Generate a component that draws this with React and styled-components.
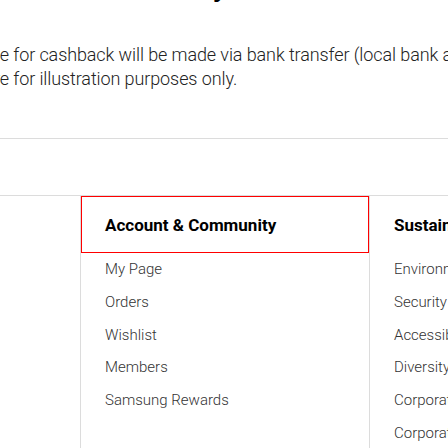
import React from 'react';
import styled, { createGlobalStyle } from 'styled-components';

const GlobalStyle = createGlobalStyle`
	html, body {
		margin: 0;
		padding: 0;
		background: #fff;
	}
	body {
		font-family: Roboto, "Liberation Sans", sans-serif;
		overflow: hidden;
	}
`;

const footerColumns = [
	{
		title: 'Account & Community',
		focused: true,
		links: ['My Page', 'Orders', 'Wishlist', 'Members', 'Samsung Rewards'],
	},
	{
		title: 'Sustainability',
		links: [
			'Environment',
			'Security & Privacy',
			'Accessibility',
			'Diversity & Inclusion',
			'Corporate Citizenship',
			'Corporate Sustainability',
		],
	},
];

const App = () => {
	return (
		<Page>
			<GlobalStyle />
			<Notes>
				<Title>Cashback Terms Summary</Title>
				<NoteLine>
					<Lead>Payable</Lead> for cashback will be made via bank transfer (local bank account only).
				</NoteLine>
				<NoteLine>
					<Lead>Images are</Lead> for illustration purposes only.
				</NoteLine>
			</Notes>

			<Spacer />

			<Footer>
				{footerColumns.map((col) => (
					<Column key={col.title}>
						<ColumnTitle $focused={col.focused}>{col.title}</ColumnTitle>
						<LinkList>
							{col.links.map((link) => (
								<LinkItem key={link}>
									<a href="#">{link}</a>
								</LinkItem>
							))}
						</LinkList>
					</Column>
				))}
			</Footer>
		</Page>
	);
};

export default App;

const Page = styled.div`
	width: 100%;
	height: 448px;
	overflow: hidden;
	background: #fff;
`;

const Notes = styled.section`
	display: flow-root;
	margin-left: -111px;
	padding-bottom: 47px;
	border-bottom: 1px solid #dcdcdc;
`;

const Title = styled.h2`
	width: 211px;
	margin: -27px 0 42px;
	font-size: 28px;
	line-height: 28px;
	font-weight: 700;
	text-align: right;
	white-space: nowrap;
	color: #000;
`;

const NoteLine = styled.p`
	margin: 0;
	font-size: 18px;
	line-height: 24px;
	font-weight: 300;
	color: #222;
	white-space: nowrap;
	letter-spacing: -0.1px;
`;

const Lead = styled.span`
	display: inline-block;
	width: 120px;
	text-align: right;
`;

const Spacer = styled.div`
	height: 56px;
`;

const Footer = styled.footer`
	display: flex;
	padding-left: 80px;
	border-top: 1px solid #dcdcdc;
`;

const Column = styled.div`
	flex: 0 0 288px;
	border-left: 1px solid #dcdcdc;
	min-height: 260px;
`;

const ColumnTitle = styled.h3`
	margin: 0;
	height: 57px;
	box-sizing: border-box;
	display: flex;
	align-items: center;
	padding: 0 24px;
	font-size: 17px;
	font-weight: 700;
	color: #000;
	white-space: nowrap;
	outline: ${(p) => (p.$focused ? '1px solid #ff0000' : 'none')};
	outline-offset: -1px;
`;

const LinkList = styled.ul`
	list-style: none;
	margin: 0;
	padding: 0;
`;

const LinkItem = styled.li`
	padding: 0 24px;
	line-height: 32.75px;
	font-size: 15px;
	font-weight: 300;
	white-space: nowrap;

	a {
		color: #333;
		text-decoration: none;
	}
`;
